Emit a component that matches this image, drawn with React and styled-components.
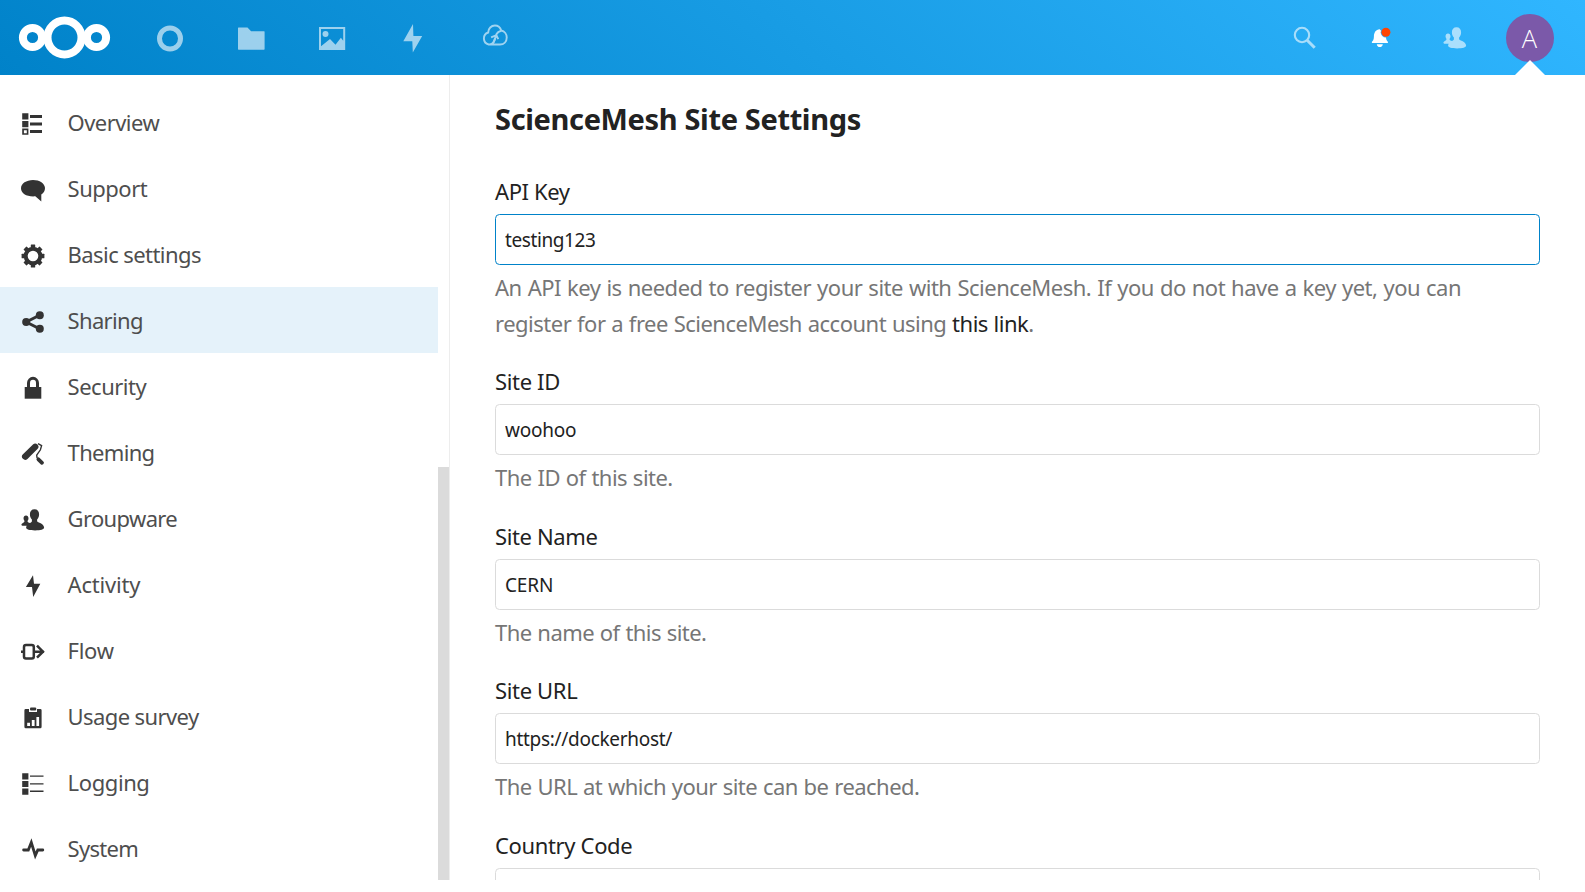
import React from 'react';
import styled, { createGlobalStyle } from 'styled-components';

const Global = createGlobalStyle`
  * { box-sizing: border-box; }
  body { margin: 0; background: #fff; font-family: 'Noto Sans', 'Open Sans', sans-serif; overflow: hidden; }
`;

const Page = styled.div`
  width: 1585px;
  height: 880px;
  display: flex;
  flex-direction: column;
  overflow: hidden;
`;

const Header = styled.header`
  flex: none;
  height: 75px;
  padding: 0 32px 0 18px;
  display: flex;
  align-items: center;
  justify-content: space-between;
  background: linear-gradient(40deg, #0082c9 0%, #30b6ff 100%);
`;

const HeaderGroup = styled.div`
  display: flex;
  align-items: center;
  height: 75px;
`;

const Logo = styled.svg`
  width: 93px;
  height: 45px;
  margin-right: 18px;
  display: block;
`;

const AppLink = styled.a`
  width: 81.2px;
  height: 75px;
  display: flex;
  align-items: center;
  justify-content: center;
  opacity: 0.6;
`;

const HeaderAction = styled.a`
  width: 75px;
  height: 75px;
  display: flex;
  align-items: center;
  justify-content: center;
  opacity: ${(p) => (p.$strong ? 1 : 0.6)};
`;

const UserMenu = styled.div`
  width: 75px;
  height: 75px;
  margin-right: -14px;
  display: flex;
  align-items: center;
  justify-content: center;
  position: relative;
`;

const Avatar = styled.div`
  width: 48px;
  height: 48px;
  border-radius: 50%;
  background: #7b59a9;
  color: #fff;
  font: 25.5px/48px 'Open Sans', 'Noto Sans', sans-serif;
  font-weight: 300;
  text-align: center;
`;

const Pointer = styled.div`
  position: absolute;
  left: 22.5px;
  bottom: 0;
  border: 15px solid transparent;
  border-top: 0;
  border-bottom-color: #fff;
`;

const Body = styled.div`
  flex: 1;
  min-height: 0;
  display: flex;
`;

const Sidebar = styled.nav`
  width: 450px;
  flex: none;
  display: flex;
  border-right: 1px solid #ededed;
`;

const NavList = styled.ul`
  width: 438px;
  margin: 0;
  padding: 14px 0 0;
  list-style: none;
`;

const NavItem = styled.li`
  height: 66px;
  padding-left: 21px;
  display: flex;
  align-items: center;
  background: ${(p) => (p.$active ? '#e5f2fa' : 'transparent')};
`;

const NavIcon = styled.svg`
  width: 24px;
  height: 24px;
  margin: 4px 22.6px 0 0;
  flex: none;
  display: block;
  color: #333;
  overflow: visible;
`;

const NavLabel = styled.span`
  font-size: 22px;
  line-height: 66px;
  color: #4e4e4e;
  white-space: nowrap;
  letter-spacing: ${(p) => p.$ls || 0}px;
`;

const Track = styled.div`
  width: 11px;
  padding-top: 392px;
  display: flex;
`;

const Thumb = styled.div`
  flex: 1;
  background: #dbdbdb;
`;

const Content = styled.main`
  flex: 1;
  padding: 23px 45px 0;
`;

const Title = styled.h2`
  margin: 0 0 38px;
  font-size: 29px;
  line-height: 42px;
  font-weight: 700;
  color: #222;
  white-space: nowrap;
  letter-spacing: ${(p) => p.$ls || 0}px;
`;

const Field = styled.section`
  display: flex;
  flex-direction: column;
  margin-bottom: 26.5px;
`;

const Label = styled.label`
  height: 36px;
  font-size: 22px;
  line-height: 26px;
  color: #222;
  align-self: flex-start;
  white-space: nowrap;
  letter-spacing: ${(p) => p.$ls || 0}px;
`;

const Input = styled.input`
  width: 1045px;
  height: 51px;
  margin: 0;
  padding: 1px 9px 0;
  border: 1px solid ${(p) => (p.$focused ? '#0082c9' : '#dbdbdb')};
  border-radius: 4.5px;
  outline: none;
  background: #fff;
  font: 19px 'Noto Sans', sans-serif;
  color: #222;
  letter-spacing: ${(p) => p.$ls || 0}px;
`;

const Hint = styled.p`
  margin: 5.2px 0 0;
  display: flex;
  flex-direction: column;
  align-items: flex-start;
  color: #767676;
`;

const HintLine = styled.span`
  font-size: 22px;
  line-height: 35.8px;
  white-space: nowrap;
  letter-spacing: ${(p) => p.$ls || 0}px;
  word-spacing: ${(p) => p.$ws || 0}px;
`;

const Link = styled.a`
  color: #222;
`;

const People = () => (
  <g fill="currentColor">
    <path d="M13.5 1.2c3 0 4.6 2.1 4.6 5 0 2.300-.8 4.100-2 5.400v1.700c.4 1.200 6.900 2.300 7 6.300 0 1.800-3.500 2.900-9 2.900s-9-1-9-2.900c0-.7.200-1.300.600-1.900H2.400c-1.500 0-2-.600-2-1.300 0-1.200 3-1.900 3-2.700v-.900a4 4 0 0 1-.900-2.500C2.500 8.400 3.500 7.400 5 7.400s2.500 1 2.500 2.900c0 1-.3 1.900-.9 2.500v.9c.1.500 1.400.9 2.300 1.400.9-.7 2-1.200 2-1.900v-1.600c-1.200-1.300-2-3.100-2-5.400 0-2.900 1.600-5 4.600-5z" />
  </g>
);

const Bolt = () => <path fill="currentColor" d="M12 1.200 4.900 13h6.100L12.200 23 19.300 9.800h-6.300z" />;

const icons = {
  overview: (
    <g fill="currentColor">
      <path d="M1.200 1.200h6.200v6.200H1.200zM1.200 9h6.200v6.200H1.200z" />
      <path fillRule="evenodd" d="M1.200 16.600h6.200v6.200H1.200zm1.700 1.600v3h2.900v-3z" />
      <path d="M9 3h12v3H9zM9 10.500h12v3H9zM9 18h12v3H9z" />
    </g>
  ),
  support: (
    <path fill="currentColor" d="M12 2c6.600 0 12 3.500 12 8.100 0 2.900-1.300 5-3.700 6.300V23.500l-6-5.200C6 19 0 15.500 0 10.200 0 5.600 5.400 2 12 2z" />
  ),
  gear: (
    <g>
      <circle cx="12" cy="12" r="7.300" fill="none" stroke="currentColor" strokeWidth="4" />
      {[0, 45, 90, 135, 180, 225, 270, 315].map((a) => (
        <rect key={a} x="9.800" y=".6" width="4.400" height="4" rx=".5" fill="currentColor" transform={`rotate(${a} 12 12)`} />
      ))}
    </g>
  ),
  share: (
    <g fill="currentColor">
      <path d="M19 5 5.200 12 19 19" fill="none" stroke="currentColor" strokeWidth="3" />
      <circle cx="18.800" cy="5.200" r="4" />
      <circle cx="5.200" cy="12" r="4" />
      <circle cx="18.800" cy="18.800" r="4" />
    </g>
  ),
  lock: (
    <g>
      <path d="M7.500 12V7a4.500 4.700 0 0 1 9 0v5" fill="none" stroke="currentColor" strokeWidth="3" />
      <path fill="currentColor" d="M3.700 11h16.600v11.700H3.700z" />
    </g>
  ),
  roller: (
    <g fill="none" stroke="currentColor">
      <path d="M4.200 14.600 14.200 4.800" strokeWidth="6.400" strokeLinecap="round" />
      <path d="m17 1.600 3.600 2-1.200 4.200-3.700 5.400.4 3" strokeWidth="1.400" />
      <path d="m17.400 17.300 3.600 3.500" strokeWidth="3.800" strokeLinecap="round" />
    </g>
  ),
  people: <People />,
  bolt: <Bolt />,
  flow: (
    <g fill="none" stroke="currentColor" strokeWidth="2.500">
      <rect x="3" y="4.900" width="9.800" height="13.600" rx="2" />
      <path d="M0 11.700h3M13 11.700h10M16 5.700l6 6-6 6" />
    </g>
  ),
  survey: (
    <g fill="currentColor">
      <path fillRule="evenodd" d="M4.700 2.900H8v3h8v-3h3.300q1.300 0 1.300 1.300v16.500q0 1.500-1.300 1.500H4.700q-1.300 0-1.300-1.500V4.200q0-1.300 1.300-1.300zM6.200 16.800v3.200H9v-3.200zm4.600-2.700v5.900h2.800v-5.900zm4.600-3v8.900h2.700v-8.900z" />
      <rect x="9" y="1.500" width="6.200" height="3" rx="1" />
    </g>
  ),
  logging: (
    <g fill="currentColor">
      <path d="M1.200 1.200h6.200v6.200H1.200zM1.200 8.900h6.200v6.200H1.200zM1.200 16.600h6.200v6.200H1.200z" />
      <path d="M9 3.500h13.500v1.300H9zM9 11.200h13.500v1.300H9zM9 18.600h13.500v1.300H9z" />
    </g>
  ),
  pulse: (
    <path d="M2.600 12h4.700l3-7.500 4 13 2.500-5.500h5" fill="none" stroke="currentColor" strokeWidth="2.800" strokeLinecap="round" />
  ),
};

const navItems = [
  { icon: 'overview', label: 'Overview', ls: -0.55 },
  { icon: 'support', label: 'Support', ls: -0.5 },
  { icon: 'gear', label: 'Basic settings', ls: -0.57 },
  { icon: 'share', label: 'Sharing', ls: -0.68, active: true },
  { icon: 'lock', label: 'Security', ls: -0.5 },
  { icon: 'roller', label: 'Theming', ls: -0.68 },
  { icon: 'people', label: 'Groupware', ls: -0.65 },
  { icon: 'bolt', label: 'Activity', ls: -0.2 },
  { icon: 'flow', label: 'Flow', ls: -0.3 },
  { icon: 'survey', label: 'Usage survey', ls: -0.6 },
  { icon: 'logging', label: 'Logging', ls: -0.4 },
  { icon: 'pulse', label: 'System', ls: -0.7 },
];

const fields = [
  {
    label: 'API Key', labelLs: -0.4, value: 'testing123', valueLs: -0.4, focused: true,
    hint: [
      { ls: -0.49, ws: 0.75, text: 'An API key is needed to register your site with ScienceMesh. If you do not have a key yet, you can' },
      { ls: -0.5, ws: 0.55, text: <>register for a free ScienceMesh account using <Link>this link</Link>.</> },
    ],
  },
  { label: 'Site ID', labelLs: -0.35, value: 'woohoo', valueLs: -0.25, hint: [{ ls: -0.52, ws: 0.6, text: 'The ID of this site.' }] },
  { label: 'Site Name', labelLs: -0.38, value: 'CERN', valueLs: -0.15, hint: [{ ls: -0.55, ws: 0.6, text: 'The name of this site.' }] },
  { label: 'Site URL', labelLs: -0.35, value: 'https://dockerhost/', valueLs: -0.3, hint: [{ ls: -0.53, ws: 0.6, text: 'The URL at which your site can be reached.' }] },
  { label: 'Country Code', labelLs: -0.35, value: '', valueLs: 0, hint: [] },
];

export default function App() {
  return (
    <>
      <Global />
      <Page>
        <Header>
          <HeaderGroup>
            <Logo viewBox="0 0 93 45" fill="none" stroke="#fff">
              <circle cx="14.500" cy="22.500" r="9.600" strokeWidth="8" />
              <circle cx="46.500" cy="22.500" r="17" strokeWidth="8" />
              <circle cx="78.500" cy="22.500" r="9.600" strokeWidth="8" />
            </Logo>
            <AppLink>
              <svg width="30" height="30" viewBox="0 0 30 30"><circle cx="15" cy="15.500" r="10.500" fill="none" stroke="#fff" strokeWidth="5" /></svg>
            </AppLink>
            <AppLink>
              <svg width="30" height="30" viewBox="0 0 30 30"><path fill="#fff" d="M2.500 4.500h9l3.600 3.700h13q.5 0 .5.500v17.400q0 .6-.6.600H2.600q-.6 0-.6-.6V5q0-.5.500-.5z" /></svg>
            </AppLink>
            <AppLink>
              <svg width="30" height="30" viewBox="0 0 30 30" fill="#fff">
                <path fillRule="evenodd" d="M2 4h26.200v23H2zm2 2v17.300L13 16l5.500 5.700 5.400-7 2.300 3V6z" />
                <circle cx="8.500" cy="11" r="3" />
              </svg>
            </AppLink>
            <AppLink>
              <svg width="30" height="30" viewBox="0 0 30 30"><path fill="#fff" d="M15 1 5.300 18.300h9L14.800 29.500 24.200 13h-8.800z" /></svg>
            </AppLink>
            <AppLink>
              <svg width="30" height="30" viewBox="0 0 30 30" fill="none" stroke="#fff" strokeWidth="2">
                <g transform="translate(2 -.6) scale(.96)">
                  <path d="M9 23H8A6.500 6.500 0 0 1 7.500 10.500c0-4.300 3.300-7.200 7-7.200 3.200 0 5.600 1.900 6.600 5.100a7.300 7.300 0 0 1 5.700 7.300c0 4.500-3 7.300-7 7.300H9q4.500-.5 5.800-6.500" />
                  <path d="M21.200 9q-4 .3-6 5.300M10.500 15.500l5.500-2.200 2 4.200M15.800 13.800 12.500 22" />
                </g>
              </svg>
            </AppLink>
          </HeaderGroup>
          <HeaderGroup>
            <HeaderAction>
              <svg width="24" height="24" viewBox="0 0 24 24" fill="none" stroke="#fff">
                <circle cx="9" cy="9" r="7.200" strokeWidth="2.100" />
                <path d="m14.200 14.200 7.500 7.500" strokeWidth="3" />
              </svg>
            </HeaderAction>
            <HeaderAction $strong>
              <svg width="24" height="24" viewBox="0 0 24 24" fill="#fff">
                <g transform="translate(-.4 -1)">
                  <path d="M12.200 4.200c-4.200.4-5.900 3.400-5.900 7.500 0 2.800-.9 4-2 5v1.300h16v-1.300c-1-1-1.900-2.200-2-5zM9.200 19.200h6q-.4 2.800-3 2.800t-3-2.800z" />
                  <circle cx="18.300" cy="7.200" r="5.200" fill="#2caefa" />
                  <circle cx="18.300" cy="7.200" r="4.500" fill="#ff4402" />
                </g>
              </svg>
            </HeaderAction>
            <HeaderAction>
              <svg width="24" height="24" viewBox="0 0 24 24" color="#fff"><People /></svg>
            </HeaderAction>
            <UserMenu>
              <Avatar>A</Avatar>
              <Pointer />
            </UserMenu>
          </HeaderGroup>
        </Header>
        <Body>
          <Sidebar>
            <NavList>
              {navItems.map((item) => (
                <NavItem key={item.label} $active={item.active}>
                  <NavIcon viewBox="0 0 24 24">{icons[item.icon]}</NavIcon>
                  <NavLabel $ls={item.ls}>{item.label}</NavLabel>
                </NavItem>
              ))}
            </NavList>
            <Track><Thumb /></Track>
          </Sidebar>
          <Content>
            <Title $ls={-0.35}>ScienceMesh Site Settings</Title>
            {fields.map((f) => (
              <Field key={f.label}>
                <Label $ls={f.labelLs}>{f.label}</Label>
                <Input $focused={f.focused} $ls={f.valueLs} defaultValue={f.value} />
                <Hint>
                  {f.hint.map((line, i) => (
                    <HintLine key={i} $ls={line.ls} $ws={line.ws}>{line.text}</HintLine>
                  ))}
                </Hint>
              </Field>
            ))}
          </Content>
        </Body>
      </Page>
    </>
  );
}
